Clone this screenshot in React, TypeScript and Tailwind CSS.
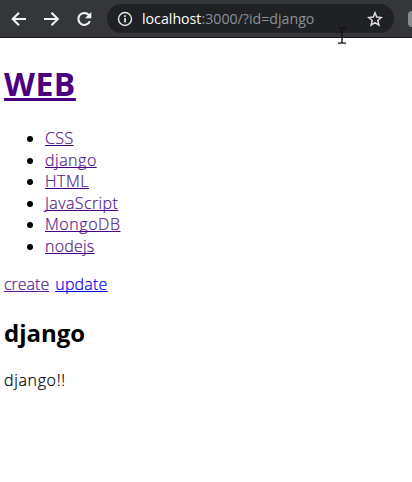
import React from "react";

const items = [
  { label: "CSS", spacing: "tracking-[0.4px]" },
  { label: "django", spacing: "tracking-[0.5px]" },
  { label: "HTML", spacing: "tracking-[0.5px]" },
  { label: "JavaScript", spacing: "tracking-[0.4px]" },
  { label: "MongoDB", spacing: "tracking-[0.55px]" },
  { label: "nodejs", spacing: "tracking-[0.2px]" },
];

function Toolbar() {
  return (
    <header className="flex h-[38px] items-center border-b border-[#17181b] bg-[#35363a]">
      <svg className="ml-[9px] h-[18px] w-[18px] shrink-0" viewBox="0 0 18 18" fill="none" stroke="#f1f3f4" strokeWidth="2.1">
        <path d="M17 9H4M10 2.7 3.7 9l6.3 6.3" />
      </svg>
      <svg className="ml-[16px] h-[18px] w-[18px] shrink-0" viewBox="0 0 18 18" fill="none" stroke="#f1f3f4" strokeWidth="2.1">
        <path d="M1 9h13M8.5 2.7 14.8 9l-6.3 6.3" />
      </svg>
      <svg className="ml-[14px] h-[18px] w-[18px] shrink-0" viewBox="0 0 18 18">
        <path d="M14.9 11.2A6 6 0 1 1 13.7 4.8L15.4 6.5" fill="none" stroke="#f1f3f4" strokeWidth="2.1" />
        <path d="M16.3 2v6.3H10Z" fill="#f1f3f4" />
      </svg>
      <div className="ml-[14px] flex h-[29px] w-[287px] shrink-0 items-center rounded-full bg-[#202124] pl-[10px]">
        <svg className="h-4 w-4 shrink-0" viewBox="0 0 16 16" fill="none" stroke="#e8eaed">
          <circle cx="8" cy="8" r="6.5" strokeWidth="1.4" />
          <path d="M8 7v4.6M8 4.2v1.7" strokeWidth="1.7" />
        </svg>
        <span className="ml-[9px] w-[219px] whitespace-nowrap text-[14.2px] leading-5 text-[#8b9198]">
          <span className="text-white">localhost</span>:3000/?id=django
        </span>
        <svg className="ml-[6px] h-4 w-4 shrink-0" viewBox="0 0 16 16" fill="none" stroke="#dadce0" strokeWidth="1.5">
          <path d="m8 1.8 1.7 4.3 4.6.4-3.5 3 1.1 4.6L8 11.7l-3.9 2.4 1.1-4.6-3.5-3 4.6-.4Z" />
        </svg>
      </div>
      <div className="ml-auto h-4 w-1 rounded-l-sm bg-[#8b8c8e]" />
    </header>
  );
}

export default function App() {
  return (
    <div className="relative h-[482px] w-[412px] overflow-hidden bg-white font-['Open_Sans','Noto_Sans',sans-serif] text-black">
      <Toolbar />
      <main className="pl-1 text-[16px] font-light">
        <h1 className="pt-[22px] text-[32px] leading-[48px] font-bold text-[#4b0082]">
          <a className="tracking-[0.5px] underline decoration-[3px] underline-offset-[2px] [text-decoration-skip-ink:none]">WEB</a>
        </h1>
        <ul className="mt-[20px] list-disc pl-[41px] leading-[21.6px]">
          {items.map((item) => (
            <li key={item.label}>
              <a className={`text-[#551a8b] underline decoration-[#4b0082] decoration-1 underline-offset-1 [-webkit-text-stroke:0.2px] [text-decoration-skip-ink:none] ${item.spacing}`}>{item.label}</a>
            </li>
          ))}
        </ul>
        <nav className="mt-[16px] flex gap-[6px] leading-[21px] underline-offset-1 [-webkit-text-stroke:0.2px] [text-decoration-skip-ink:none]">
          <a className="text-[#551a8b] underline decoration-1">create</a>
          <a className="tracking-[0.2px] text-[#0000ee] underline decoration-1">update</a>
        </nav>
        <h2 className="mt-[22px] text-[24px] leading-8 font-bold">django</h2>
        <p className="mt-[21px] leading-[21px] tracking-[0.65px] [-webkit-text-stroke:0.2px]">django!!</p>
      </main>
      <svg className="absolute top-[27px] left-[336px] h-[18px] w-3" viewBox="0 0 12 18" fill="none" stroke="#111">
        <path d="M2 .8h3l1 1 1-1h3M6 1v15M2 16.2h3l1-1 1 1h3" strokeWidth="1.3" />
      </svg>
    </div>
  );
}
